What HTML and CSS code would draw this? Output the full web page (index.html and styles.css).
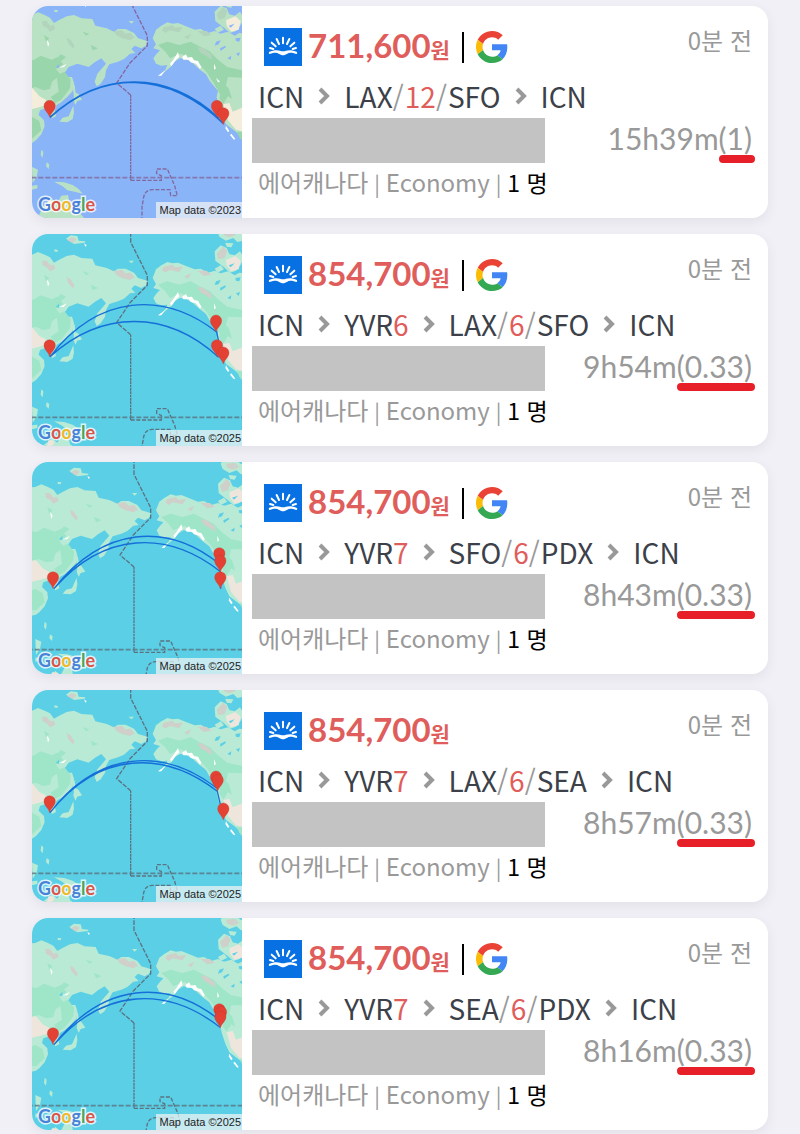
FILE: index.html
```html
<!DOCTYPE html>
<html lang="ko">
<head>
<meta charset="utf-8">
<meta name="viewport" content="width=device-width, initial-scale=1">
<title>항공권 검색 결과</title>
<link rel="stylesheet" href="styles.css">
</head>
<body>
<svg class="defs" aria-hidden="true">
  <symbol id="land" viewBox="0 0 700 760" overflow="visible">
    <path class="land" d="M-20 82L24 80 42 72 62 80 78 88 90 104 104 96 128 84 150 80 172 90 205 92 214 112 248 120 270 130 282 122 305 122 330 134 342 150 370 158 366 172 352 180 332 172 322 182 334 194 318 196 300 212 282 220 256 228 246 246 243 266 230 286 218 294 212 280 220 256 234 240 246 226 232 210 212 222 194 236 160 226 134 236 120 256 128 266 144 266 150 284 146 308 132 324 112 342 98 350 92 366 96 384 84 390 76 376 66 360 48 366 44 380 60 396 62 414 52 438 36 456 24 464-20 470Z"/>
    <path class="land" d="M386 150L396 124 412 112 430 102 446 106 462 104 486 114 512 124 530 122 552 134 572 128 590 136 612 130 632 142 646 134 720 140 720 500 660 456 648 440 628 424 606 408 594 382 584 352 578 326 582 308 570 294 556 276 546 258 528 244 506 224 486 212 468 210 452 220 440 236 420 252 402 266 424 244 430 230 412 232 396 226 388 210 398 196 408 186 388 180 396 168Z"/>
    <path class="land" d="M572 70L590 52 608 60 616 78 632 82 648 70 660 90 650 110 636 128 618 134 600 118 592 112 574 98ZM590-5L612-12 640 10 660 16 660 38 640 42 628 30 606 38 586 26 580 10ZM572 122L590 112 600 124 580 134ZM604 44L628 46 622 58 608 56Z"/>
    <path class="land" d="M126 32L140 22 160 24 164 38 184 40 182 44 150 48ZM92 64L102 66 100 72 90 70ZM314 98L330 98 322 106ZM152 312L162 316 174 334 160 338 154 350 148 334ZM148 352L150 372 146 392 130 402 106 400 116 388 134 384ZM144 282L152 290 156 324 150 326ZM52 484L58 490 56 508 50 500ZM68 522L76 528 74 542 66 534Z"/>
    <path class="land" d="M24 536L42 544 38 566 26 584ZM24 592L40 590 40 600 24 604ZM90 580L120 582 146 590 164 602 176 616 152 610 130 606 116 594ZM40 690L60 650 84 632 100 644 112 622 132 620 138 648 160 666 190 700 40 720Z"/>
    <g class="green">
      <path d="M-20 205L28 216 50 202 84 214 100 206 118 228 96 242 110 260 84 280 78 302 58 306 34 296-20 312Z"/>
      <path d="M98 260L122 250 140 274 138 300 112 334 94 344 80 326 104 310ZM-20 404L24 386 46 398 52 426 26 450-20 450ZM96 214L110 198 126 206 112 218Z"/>
      <path d="M402 170L430 160 466 170 500 160 530 176 556 188 582 214 610 236 654 246 654 268 612 266 604 298 588 318 570 286 548 252 524 226 500 208 470 196 438 210 424 190Z"/>
      <path d="M594 280L614 300 624 332 612 324 598 346 586 330ZM638 430L672 430 672 470 648 450ZM176 130L196 136 186 142ZM60 140L76 150 66 160ZM200 170L222 180 206 186Z"/>
    </g>
    <path class="sand" d="M-20 304L26 300 46 324 66 334 60 352 40 358-20 372ZM598 348L616 344 626 370 660 356 660 430 636 424 612 396ZM606 96L634 84 650 98 644 124 622 130 608 112ZM74 636L92 638 88 650 66 662Z"/>
    <path class="rock" d="M54 98L68 98 78 112 90 110 94 122 78 130 68 118 56 112ZM128 148L140 154 152 174 146 180 132 164ZM270 128L294 126 304 136 320 134 332 148 318 156 294 150 276 140ZM420 116L446 110 452 118 476 116 466 132 436 126 424 134 414 126ZM480 146L502 136 492 152ZM520 176L538 180 562 198 564 214 546 202 530 194ZM520 128L548 128 562 140 540 144ZM578 78L598 56 610 68 602 90 584 94ZM596 10L622 8 636 20 618 28 600 22ZM130 36L144 28 158 34 146 46Z"/>
    <path class="snow" d="M438 226L448 214 462 192 466 206 458 212 442 234ZM474 206L486 198 490 208 504 206 510 216 522 218 532 236 528 242 516 226 500 222 494 214 478 214ZM68 154L76 166 72 176ZM180 46L188 52 184 56ZM570 226L576 240 570 244ZM606 412L616 428 612 432 604 420ZM622 436L634 452 630 454 618 440ZM106 238L128 226 120 236ZM576 268L588 280 582 282ZM402 262L424 246 412 262Z"/>
    <path class="lake" d="M576 160L590 156 584 168 572 172ZM588 180L604 172 606 176 590 188ZM610 210L622 202 620 214ZM634 150L650 148 646 160 636 158ZM636 196L648 192 644 204ZM96 236L106 226 104 240ZM614 112L632 106 620 118Z"/>
    <path class="border" stroke-dasharray="14 4" d="M320-6V42L370 142V172L318 224 278 284 320 320"/>
    <path class="border" stroke-dasharray="8 2" d="M320 320V576"/>
    <path class="border" stroke-dasharray="12 5" d="M320 576H412V562L398 556V542H430L452 592 460 622H440L438 604H384C354 606 360 636 354 652V700"/>
    <path class="equator" d="M-20 568H700"/>
  </symbol>
  <symbol id="pin" viewBox="-18 -52 36 54" overflow="visible">
    <path class="pin" d="M0 0C-3-14-17-20-17-34A17 17 0 0 1 17-34C17-20 3-14 0 0Z"/>
  </symbol>
  <symbol id="sunrise" viewBox="0 0 114 114">
    <g fill="none" stroke="#fff" stroke-width="6" stroke-linecap="round">
      <path d="M57 29V46M38 33L45 48M76 33L69 48M23 44L35 55M91 44L79 55M18 60L28 63M96 60L86 63"/>
    </g>
    <path fill="#fff" d="M15 72C28 65 42 66 48 68Q57 71 66 68C72 66 86 65 99 72Q101 78 97 78C84 74 76 73 70 77L62 81Q57 83 52 81L44 77C38 73 30 74 17 78Q13 78 15 72Z"/>
  </symbol>
  <symbol id="google-g" viewBox="0 0 48 48">
    <path fill="#ea4335" d="M24 9.5c3.54 0 6.71 1.22 9.21 3.6l6.85-6.85C35.9 2.38 30.47 0 24 0 14.62 0 6.51 5.38 2.56 13.22l7.98 6.19C12.43 13.72 17.74 9.5 24 9.5z"/>
    <path fill="#4285f4" d="M46.98 24.55c0-1.57-.15-3.09-.38-4.55H24v9.02h12.94c-.58 2.96-2.26 5.48-4.78 7.18l7.73 6c4.51-4.18 7.09-10.36 7.09-17.65z"/>
    <path fill="#fbbc05" d="M10.53 28.59c-.48-1.45-.76-2.99-.76-4.59s.27-3.14.76-4.59l-7.98-6.19C.92 16.46 0 20.12 0 24c0 3.88.92 7.54 2.56 10.78l7.97-6.19z"/>
    <path fill="#34a853" d="M24 48c6.48 0 11.93-2.13 15.89-5.81l-7.73-6c-2.15 1.45-4.92 2.3-8.16 2.3-6.26 0-11.57-4.22-13.47-9.91l-7.98 6.19C6.51 42.62 14.62 48 24 48z"/>
  </symbol>
  <symbol id="chevron" viewBox="0 0 12 18">
    <path fill="none" stroke="#999" stroke-width="4" d="M2 2L9 9 2 16"/>
  </symbol>
</svg>

<main class="results">
  <article class="card">
    <div class="map map-classic">
      <svg class="map-art" viewBox="24 18 630 636" preserveAspectRatio="xMidYMid slice" role="img" aria-label="ICN–LAX/SFO–ICN 지도">
        <use href="#land" y="-35" width="700" height="760"/>
        <path class="arc arc-bold" d="M78 352C235 210 430 212 584 354M78 352C235 208 430 210 598 370"/>
        <use href="#pin" x="59" y="300" width="36" height="54"/><use href="#pin" x="561" y="300" width="36" height="54"/><use href="#pin" x="580" y="322" width="36" height="54"/>
      </svg>
      <span class="brand"><i class="b">G</i><i class="r">o</i><i class="y">o</i><i class="b">g</i><i class="g">l</i><i class="r">e</i></span>
      <span class="credit">Map data ©2023</span>
    </div>
    <div class="info">
      <div class="head"><svg class="logo"><use href="#sunrise"/></svg><strong class="price">711,600<small>원</small></strong><span class="rule"></span><svg class="g-logo"><use href="#google-g"/></svg><time class="ago">0분 전</time></div>
      <div class="route"><span>ICN</span><svg class="chev"><use href="#chevron"/></svg><span>LAX<s>/</s><em>12</em><s>/</s>SFO</span><svg class="chev"><use href="#chevron"/></svg><span>ICN</span></div>
      <div class="middle"><span class="mask"></span><span class="duration">15h39m<mark>(1)</mark></span></div>
      <div class="fare">에어캐나다<span class="sep"> | </span>Economy<span class="sep"> | </span><b>1 명</b></div>
    </div>
  </article>

  <article class="card">
    <div class="map">
      <svg class="map-art" viewBox="24 18 630 636" preserveAspectRatio="xMidYMid slice" role="img" aria-label="ICN–YVR–LAX/SFO–ICN 지도">
        <use href="#land" width="700" height="760"/>
        <path class="arc" d="M78 386C225 196 420 190 578 312L586 350M78 386C235 244 430 246 584 388"/>
        <use href="#pin" x="59" y="334" width="36" height="54"/><use href="#pin" x="558" y="260" width="36" height="54"/><use href="#pin" x="561" y="334" width="36" height="54"/><use href="#pin" x="580" y="356" width="36" height="54"/>
      </svg>
      <span class="brand"><i class="b">G</i><i class="r">o</i><i class="y">o</i><i class="b">g</i><i class="g">l</i><i class="r">e</i></span>
      <span class="credit">Map data ©2025</span>
    </div>
    <div class="info">
      <div class="head"><svg class="logo"><use href="#sunrise"/></svg><strong class="price">854,700<small>원</small></strong><span class="rule"></span><svg class="g-logo"><use href="#google-g"/></svg><time class="ago">0분 전</time></div>
      <div class="route"><span>ICN</span><svg class="chev"><use href="#chevron"/></svg><span>YVR<em>6</em></span><svg class="chev"><use href="#chevron"/></svg><span>LAX<s>/</s><em>6</em><s>/</s>SFO</span><svg class="chev"><use href="#chevron"/></svg><span>ICN</span></div>
      <div class="middle"><span class="mask"></span><span class="duration">9h54m<mark>(0.33)</mark></span></div>
      <div class="fare">에어캐나다<span class="sep"> | </span>Economy<span class="sep"> | </span><b>1 명</b></div>
    </div>
  </article>

  <article class="card">
    <div class="map">
      <svg class="map-art" viewBox="24 18 630 636" preserveAspectRatio="xMidYMid slice" role="img" aria-label="ICN–YVR–SFO/PDX–ICN 지도">
        <use href="#land" x="10" y="13" width="700" height="760"/>
        <path class="arc" d="M90 398C240 208 430 200 584 322M90 398C240 226 430 222 588 346L590 398"/>
        <use href="#pin" x="69" y="346" width="36" height="54"/><use href="#pin" x="568" y="274" width="36" height="54"/><use href="#pin" x="571" y="296" width="36" height="54"/><use href="#pin" x="571" y="346" width="36" height="54"/>
      </svg>
      <span class="brand"><i class="b">G</i><i class="r">o</i><i class="y">o</i><i class="b">g</i><i class="g">l</i><i class="r">e</i></span>
      <span class="credit">Map data ©2025</span>
    </div>
    <div class="info">
      <div class="head"><svg class="logo"><use href="#sunrise"/></svg><strong class="price">854,700<small>원</small></strong><span class="rule"></span><svg class="g-logo"><use href="#google-g"/></svg><time class="ago">0분 전</time></div>
      <div class="route"><span>ICN</span><svg class="chev"><use href="#chevron"/></svg><span>YVR<em>7</em></span><svg class="chev"><use href="#chevron"/></svg><span>SFO<s>/</s><em>6</em><s>/</s>PDX</span><svg class="chev"><use href="#chevron"/></svg><span>ICN</span></div>
      <div class="middle"><span class="mask"></span><span class="duration">8h43m<mark>(0.33)</mark></span></div>
      <div class="fare">에어캐나다<span class="sep"> | </span>Economy<span class="sep"> | </span><b>1 명</b></div>
    </div>
  </article>

  <article class="card">
    <div class="map">
      <svg class="map-art" viewBox="24 18 630 636" preserveAspectRatio="xMidYMid slice" role="img" aria-label="ICN–YVR–LAX/SEA–ICN 지도">
        <use href="#land" width="700" height="760"/>
        <path class="arc" d="M78 386C225 196 420 190 578 312M78 386C225 200 420 198 580 322L598 400"/>
        <use href="#pin" x="59" y="334" width="36" height="54"/><use href="#pin" x="558" y="260" width="36" height="54"/><use href="#pin" x="563" y="270" width="36" height="54"/><use href="#pin" x="580" y="356" width="36" height="54"/>
      </svg>
      <span class="brand"><i class="b">G</i><i class="r">o</i><i class="y">o</i><i class="b">g</i><i class="g">l</i><i class="r">e</i></span>
      <span class="credit">Map data ©2025</span>
    </div>
    <div class="info">
      <div class="head"><svg class="logo"><use href="#sunrise"/></svg><strong class="price">854,700<small>원</small></strong><time class="ago">0분 전</time></div>
      <div class="route"><span>ICN</span><svg class="chev"><use href="#chevron"/></svg><span>YVR<em>7</em></span><svg class="chev"><use href="#chevron"/></svg><span>LAX<s>/</s><em>6</em><s>/</s>SEA</span><svg class="chev"><use href="#chevron"/></svg><span>ICN</span></div>
      <div class="middle"><span class="mask"></span><span class="duration">8h57m<mark>(0.33)</mark></span></div>
      <div class="fare">에어캐나다<span class="sep"> | </span>Economy<span class="sep"> | </span><b>1 명</b></div>
    </div>
  </article>

  <article class="card">
    <div class="map">
      <svg class="map-art" viewBox="24 18 630 636" preserveAspectRatio="xMidYMid slice" role="img" aria-label="ICN–YVR–SEA/PDX–ICN 지도">
        <use href="#land" x="10" y="13" width="700" height="760"/>
        <path class="arc" d="M90 398C240 208 430 200 584 322M90 398C240 226 430 222 588 346"/>
        <use href="#pin" x="69" y="346" width="36" height="54"/><use href="#pin" x="568" y="274" width="36" height="54"/><use href="#pin" x="573" y="282" width="36" height="54"/><use href="#pin" x="571" y="296" width="36" height="54"/>
      </svg>
      <span class="brand"><i class="b">G</i><i class="r">o</i><i class="y">o</i><i class="b">g</i><i class="g">l</i><i class="r">e</i></span>
      <span class="credit">Map data ©2025</span>
    </div>
    <div class="info">
      <div class="head"><svg class="logo"><use href="#sunrise"/></svg><strong class="price">854,700<small>원</small></strong><span class="rule"></span><svg class="g-logo"><use href="#google-g"/></svg><time class="ago">0분 전</time></div>
      <div class="route"><span>ICN</span><svg class="chev"><use href="#chevron"/></svg><span>YVR<em>7</em></span><svg class="chev"><use href="#chevron"/></svg><span>SEA<s>/</s><em>6</em><s>/</s>PDX</span><svg class="chev"><use href="#chevron"/></svg><span>ICN</span></div>
      <div class="middle"><span class="mask"></span><span class="duration">8h16m<mark>(0.33)</mark></span></div>
      <div class="fare">에어캐나다<span class="sep"> | </span>Economy<span class="sep"> | </span><b>1 명</b></div>
    </div>
  </article>
</main>
</body>
</html>
```
FILE: styles.css
```css
* { box-sizing: border-box; }

body {
  margin: 0;
  background: #f1f0f6;
  color: #3c4149;
  font-family: "Noto Sans CJK KR", sans-serif;
}

.defs { position: absolute; width: 0; height: 0; }

.results {
  display: flex;
  flex-direction: column;
  gap: 16px;
  padding: 6px 32px 4px;
}

.card {
  display: grid;
  grid-template-columns: 210px 1fr;
  background: #fff;
  border-radius: 16px;
  box-shadow: 0 4px 12px rgba(60, 60, 90, 0.08);
}

/* Map thumbnail */
.map {
  --water: #5bcfe6;
  --land: #b8ead6;
  --green: #9fe5c8;
  --sand: #eee6dc;
  --rock: #cfd0ca;
  --line: #5b7480;
  position: relative;
  overflow: hidden;
  border-radius: 16px 0 0 16px;
  background: var(--water);
}

.map-classic {
  --water: #8ab4f8;
  --land: #b9e2c4;
  --green: #9ad6ab;
  --sand: #f5eddc;
  --rock: #b2d4bc;
  --line: #81699f;
}

.map-art { position: absolute; inset: 0; width: 100%; height: 100%; }
.land { fill: var(--land); }
.green { fill: var(--green); }
.sand { fill: var(--sand); }
.rock { fill: var(--rock); }
.snow { fill: #fff; }
.lake { fill: var(--water); }
.border { fill: none; stroke: var(--line); stroke-width: 4; }
.equator { fill: none; stroke: var(--line); stroke-width: 5; stroke-dasharray: 15 6; opacity: 0.8; }
.arc { fill: none; stroke: #156fd8; stroke-width: 4; }
.arc-bold { stroke-width: 5; }
.pin { fill: #e34133; stroke: #c8382c; stroke-width: 1; }

.brand {
  position: absolute;
  left: 6px;
  bottom: 2px;
  font: 700 18px/24px Lato, sans-serif;
  -webkit-text-stroke: 3px rgba(255, 255, 255, 0.8);
  paint-order: stroke fill;
}

.brand i { font-style: normal; }
.brand .b { color: #4a82d8; }
.brand .r { color: #d9564a; }
.brand .y { color: #eeb92c; }
.brand .g { color: #4ba45c; }

.credit {
  position: absolute;
  right: 0;
  bottom: 0;
  padding: 0 1px 0 4px;
  background: rgba(245, 245, 245, 0.7);
  color: #222;
  font: 11px/16px "Liberation Sans", sans-serif;
  white-space: nowrap;
}

/* Flight details */
.info {
  display: grid;
  grid-template-rows: 38px 52px 45px 38px;
  padding: 22px 16px 17px 10px;
}

.head { display: flex; align-items: center; padding-left: 12px; }
.logo { width: 38px; height: 38px; background: #0770e3; }

.price {
  margin-left: 6px;
  color: #df5d5b;
  font: 700 33px/34px Lato, sans-serif;
  align-self: flex-start;
}

.price small { font: 700 21px/20px "Noto Sans CJK KR", sans-serif; }
.rule { width: 2px; height: 31px; margin: 0 12px; background: #000; }
.g-logo { width: 32px; height: 32px; }

.ago {
  align-self: flex-start;
  margin-left: auto;
  color: #999;
  font-size: 24px;
  line-height: 24px;
}

.route {
  display: flex;
  align-items: center;
  gap: 14px;
  padding: 10px 0 2px 6px;
  font-size: 28px;
  line-height: 40px;
  white-space: nowrap;
}

.route em { color: #df5d5b; font-style: normal; }
.route s { padding-right: 1px; color: #999; text-decoration: none; }
.chev { width: 12px; height: 18px; }

.middle { display: flex; align-items: flex-start; justify-content: space-between; }
.mask { width: 293px; height: 45px; background: #c3c3c3; }
.duration { color: #999; font: 30px/40px Lato, sans-serif; }

.duration mark {
  position: relative;
  background: none;
  color: inherit;
}

.duration mark::after {
  content: "";
  position: absolute;
  left: 0;
  right: -3px;
  bottom: -7px;
  height: 8px;
  border-radius: 4px;
  background: #e61f28;
}

.fare { padding-left: 6px; color: #999; font-size: 24px; line-height: 38px; white-space: nowrap; }
.fare b { color: #000; font-size: 23px; font-weight: 400; }
.sep { font-size: 21px; }
```
